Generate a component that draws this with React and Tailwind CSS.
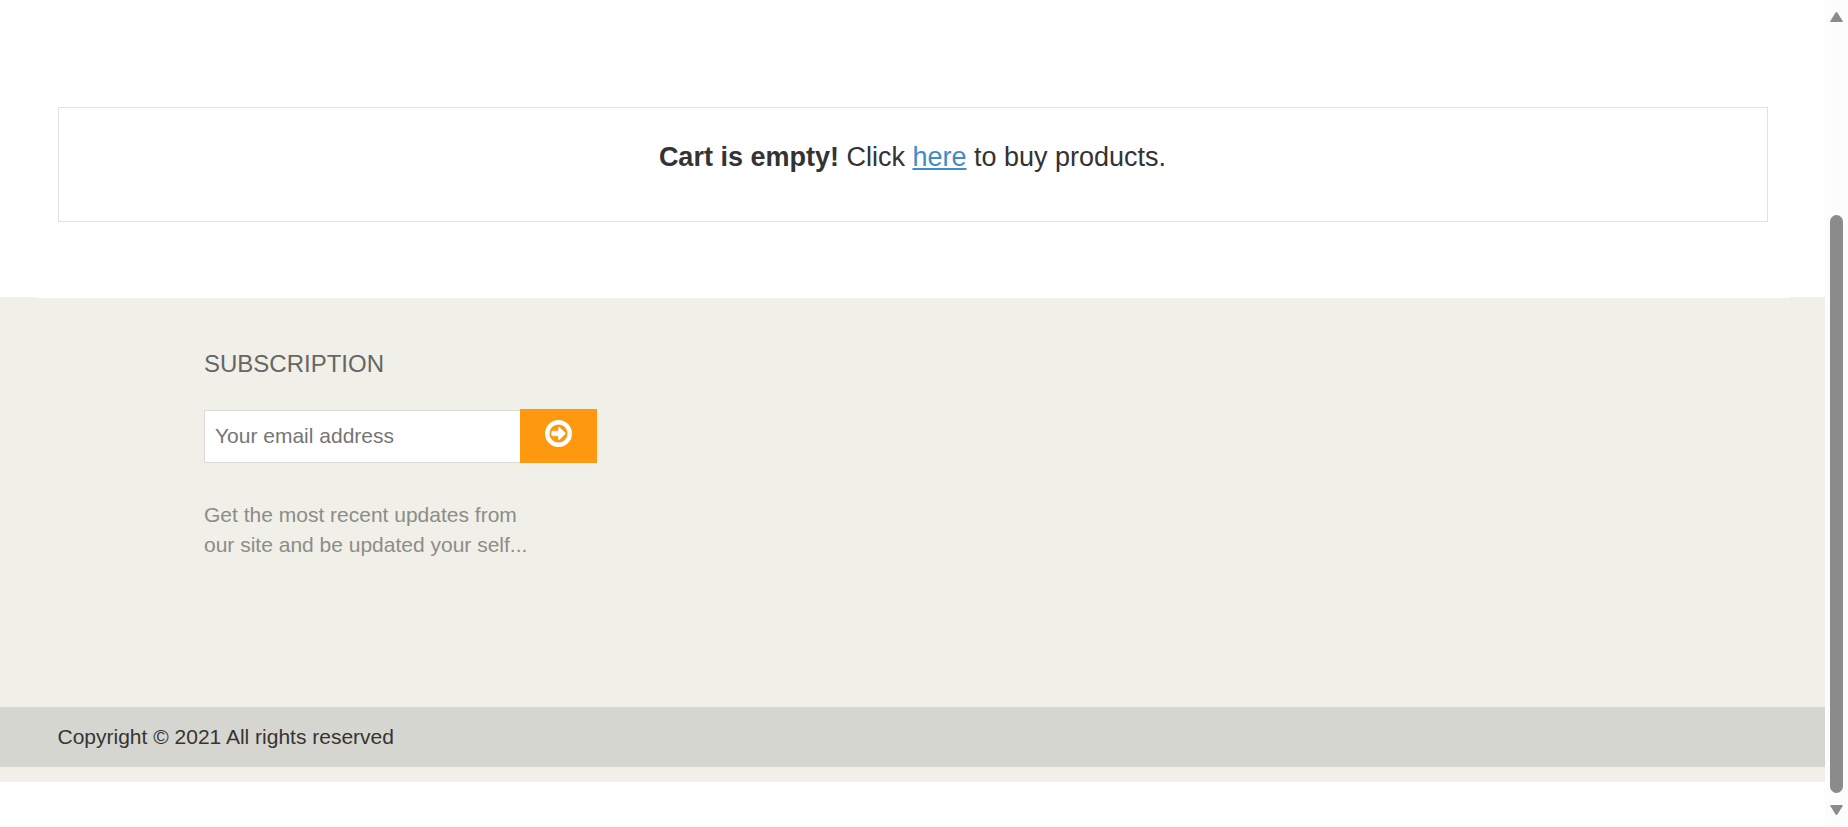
function ArrowCircle() {
  return (
    <svg className="block h-[27px] w-[27px]" viewBox="0 0 1536 1536">
      <circle cx="768" cy="768" r="642" fill="none" stroke="currentColor" strokeWidth="252" />
      <path
        fill="currentColor"
        d="M1152 768q0 -14 -9 -23l-320 -320q-9 -9 -23 -9q-13 0 -22.5 9.5t-9.5 22.5v192h-352q-13 0 -22.5 9.5t-9.5 22.5v192q0 13 9.5 22.5t22.5 9.5h352v192q0 14 9 23t23 9q12 0 24 -10l319 -319q9 -9 9 -23z"
        stroke="currentColor"
        strokeWidth="36"
      />
    </svg>
  );
}

function CartMessage() {
  return (
    <main className="h-[297px] px-[58px] pt-[107px]">
      <div className="h-[115px] w-[1710px] border border-[#e3e3dd] pr-px pt-[30px] text-center text-[27px] leading-[39px] text-[#333]">
        <strong className="font-bold">Cart is empty!</strong> Click{' '}
        <a href="#products" className="text-[#428bca] underline">here</a> to buy products.
      </div>
    </main>
  );
}

function Footer() {
  return (
    <footer className="h-[485px] bg-[#f0f0e9]">
      <div className="mx-[35px] h-px bg-white" />
      <section className="h-[409px] pl-[204px] pt-[49px]">
        <h4 className="h-[62px] text-[24px] leading-[34px] text-[#666663]">SUBSCRIPTION</h4>
        <form className="flex h-[54px] items-end">
          <input
            type="text"
            placeholder="Your email address"
            className="h-[53px] w-[316px] border border-r-0 border-[#dadada] bg-white px-[10px] pb-[2px] text-[21px] text-[#555] outline-none placeholder:text-[#757575]"
          />
          <button
            type="button"
            aria-label="Subscribe"
            className="flex h-[54px] w-[77px] justify-center bg-[#fe980f] pt-[11px] text-white"
          >
            <ArrowCircle />
          </button>
        </form>
        <p className="pt-[37px] text-[21px] leading-[30px] text-[#8c8c88]">
          Get the most recent updates from
          <br />
          our site and be updated your self...
        </p>
      </section>
      <div className="h-[60px] bg-[#d6d6d0] pl-[57.5px] pt-[15px] text-[21px] leading-[30px] text-[#363432]">
        Copyright © 2021 All rights reserved
      </div>
    </footer>
  );
}

function Scrollbar() {
  return (
    <div className="flex w-[23px] flex-col items-center bg-[#fcfcfc] pt-3">
      <svg className="h-[10px] w-[13px] shrink-0 text-[#8b8b8b]" viewBox="0 0 14 10" preserveAspectRatio="none">
        <path fill="currentColor" d="M1 10Q-.3 10 .5 8.7L5.7 1Q7-.8 8.3 1L13.5 8.7Q14.3 10 13 10Z" />
      </svg>
      <div className="mt-[193px] h-[578px] w-[13px] shrink-0 rounded-full bg-[#8b8b8b]" />
      <svg className="mt-3 h-[10px] w-[13px] shrink-0 text-[#8b8b8b]" viewBox="0 0 14 10" preserveAspectRatio="none">
        <path fill="currentColor" d="M1 0Q-.3 0 .5 1.3L5.7 9Q7 10.8 8.3 9L13.5 1.3Q14.3 0 13 0Z" />
      </svg>
    </div>
  );
}

export default function App() {
  return (
    <div className="flex h-[827px] w-[1848px] overflow-hidden bg-white font-['Liberation_Sans',Arial,sans-serif]">
      <div className="w-[1825px] shrink-0">
        <CartMessage />
        <Footer />
      </div>
      <Scrollbar />
    </div>
  );
}
